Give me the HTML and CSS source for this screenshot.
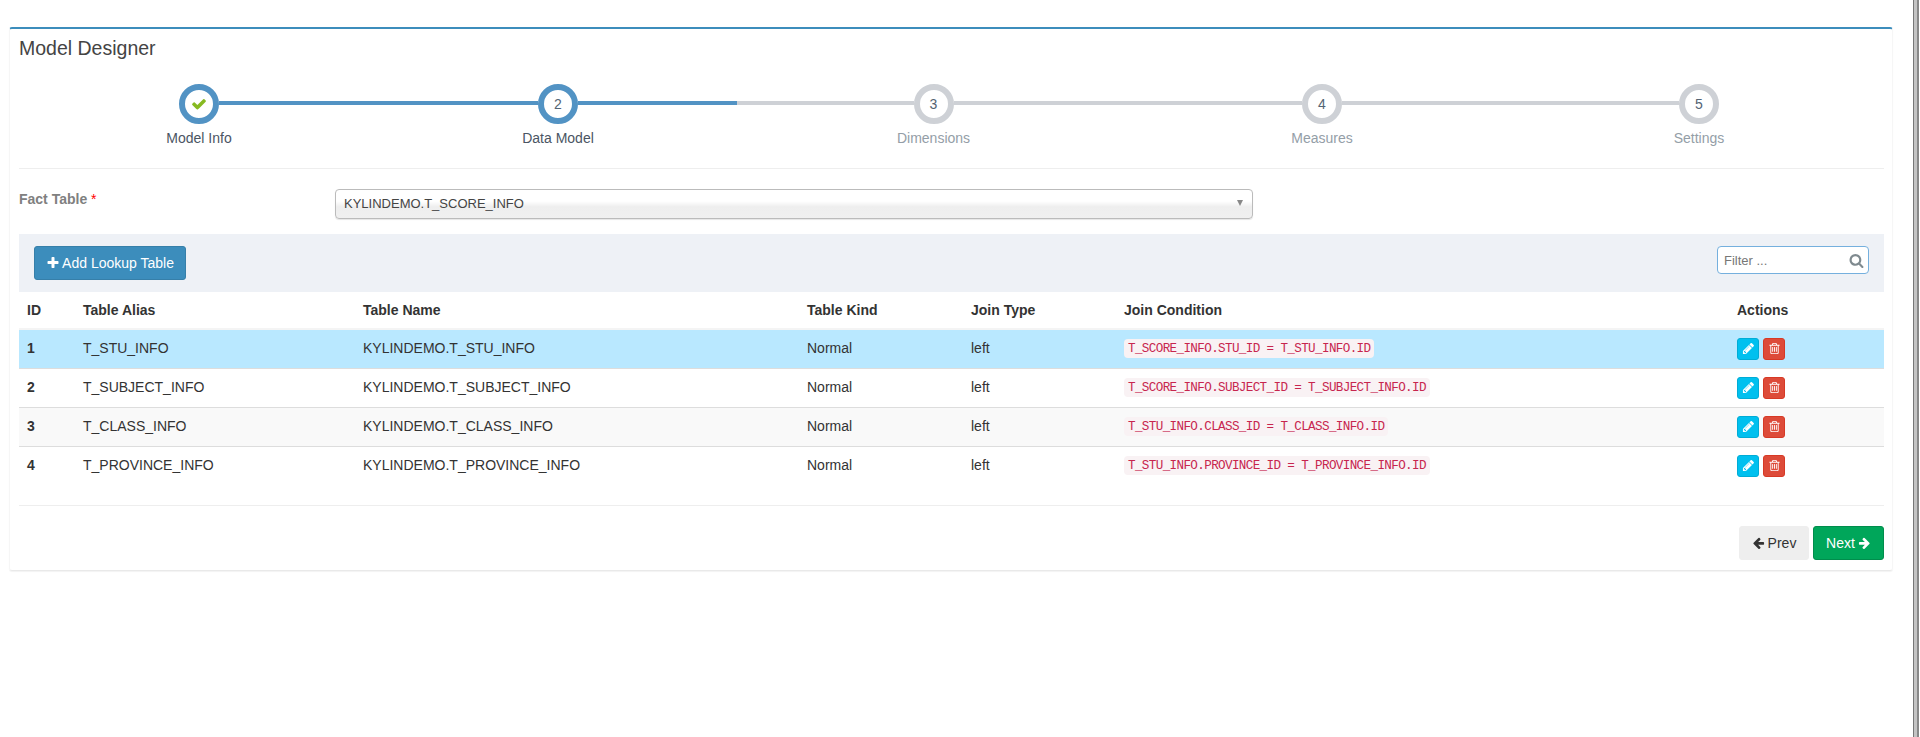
FILE: index.html
```html
<!DOCTYPE html>
<html lang="en">
<head>
<meta charset="utf-8">
<title>Model Designer</title>
<link rel="stylesheet" href="styles.css">
</head>
<body>
<svg class="defs" aria-hidden="true">
  <symbol id="i-check" viewBox="0 0 1792 1792"><path d="M1671 566q0 40-28 68l-724 724-136 136q-28 28-68 28t-68-28l-136-136-362-362q-28-28-28-68t28-68l136-136q28-28 68-28t68 28l294 295 656-657q28-28 68-28t68 28l136 136q28 28 28 68z"/></symbol>
  <symbol id="i-plus" viewBox="0 0 1792 1792"><path d="M1600 736v192q0 40-28 68t-68 28h-416v416q0 40-28 68t-68 28h-192q-40 0-68-28t-28-68v-416h-416q-40 0-68-28t-28-68v-192q0-40 28-68t68-28h416v-416q0-40 28-68t68-28h192q40 0 68 28t28 68v416h416q40 0 68 28t28 68z"/></symbol>
  <symbol id="i-search" viewBox="0 0 1792 1792"><path d="M1216 832q0-185-131.500-316.500t-316.500-131.500-316.500 131.500-131.500 316.500 131.500 316.500 316.500 131.500 316.500-131.500 131.500-316.500zm512 832q0 52-38 90t-90 38q-54 0-90-38l-343-342q-179 124-399 124-143 0-273.500-55.500t-225-150-150-225-55.500-273.500 55.500-273.500 150-225 225-150 273.500-55.500 273.500 55.500 225 150 150 225 55.500 273.500q0 220-124 399l343 343q37 37 37 90z"/></symbol>
  <symbol id="i-pencil" viewBox="0 0 1792 1792"><path d="M491 1536l91-91-235-235-91 91v107h128v128h107zm523-928q0-22-22-22-10 0-17 7l-542 542q-7 7-7 17 0 22 22 22 10 0 17-7l542-542q7-7 7-17zm-54-192l416 416-832 832h-416v-416zm683 96q0 53-37 90l-166 166-416-416 166-165q36-38 90-38 53 0 91 38l235 234q37 39 37 91z"/></symbol>
  <symbol id="i-trash" viewBox="0 0 1792 1792"><path d="M704 736v576q0 14-9 23t-23 9h-64q-14 0-23-9t-9-23v-576q0-14 9-23t23-9h64q14 0 23 9t9 23zm256 0v576q0 14-9 23t-23 9h-64q-14 0-23-9t-9-23v-576q0-14 9-23t23-9h64q14 0 23 9t9 23zm256 0v576q0 14-9 23t-23 9h-64q-14 0-23-9t-9-23v-576q0-14 9-23t23-9h64q14 0 23 9t9 23zm128 724v-948h-896v948q0 22 7 40.500t14.500 27 10.500 8.500h832q3 0 10.500-8.500t14.500-27 7-40.500zm-672-1076h448l-48-117q-7-9-17-11h-317q-10 2-17 11zm928 32v64q0 14-9 23t-23 9h-96v948q0 83-47 143.500t-113 60.500h-832q-66 0-113-58.500t-47-141.500v-952h-96q-14 0-23-9t-9-23v-64q0-14 9-23t23-9h309l70-167q15-37 54-63t79-26h320q40 0 79 26t54 63l70 167h309q14 0 23 9t9 23z"/></symbol>
  <symbol id="i-left" viewBox="0 0 1792 1792"><path d="M1664 896v128q0 53-32.500 90.500t-84.500 37.500h-704l293 294q38 36 38 90t-38 90l-75 76q-37 37-90 37-52 0-91-37l-651-652q-37-37-37-90 0-52 37-91l651-650q38-38 91-38 52 0 90 38l75 74q38 38 38 91t-38 91l-293 293h704q52 0 84.500 37.500t32.500 90.500z"/></symbol>
  <symbol id="i-right" viewBox="0 0 1792 1792"><path d="M1600 960q0 54-37 91l-651 651q-39 37-91 37-51 0-90-37l-75-75q-38-38-38-91t38-91l293-293h-704q-52 0-84.500-37.500t-32.500-90.500v-128q0-53 32.500-90.500t84.500-37.500h704l-293-294q-38-36-38-90t38-90l75-75q38-38 90-38 53 0 91 38l651 651q37 35 37 90z"/></symbol>
</svg>

<div class="page">
  <main class="box">
    <h3 class="box-title">Model Designer</h3>

    <ol class="steps">
      <li class="step">
        <div class="track"><span class="ln ln-none"></span><span class="dot dot-on"><svg class="ic-check"><use href="#i-check"/></svg></span><span class="ln ln-on"></span></div>
        <div class="step-title title-on">Model Info</div>
      </li>
      <li class="step">
        <div class="track"><span class="ln ln-on"></span><span class="dot dot-on">2</span><span class="ln ln-on"></span></div>
        <div class="step-title title-on">Data Model</div>
      </li>
      <li class="step">
        <div class="track"><span class="ln"></span><span class="dot">3</span><span class="ln"></span></div>
        <div class="step-title">Dimensions</div>
      </li>
      <li class="step">
        <div class="track"><span class="ln"></span><span class="dot">4</span><span class="ln"></span></div>
        <div class="step-title">Measures</div>
      </li>
      <li class="step">
        <div class="track"><span class="ln"></span><span class="dot">5</span><span class="ln ln-none"></span></div>
        <div class="step-title">Settings</div>
      </li>
    </ol>

    <div class="fact-row">
      <label class="fact-label">Fact Table <span class="req">*</span></label>
      <div class="chosen"><span>KYLINDEMO.T_SCORE_INFO</span><i class="caret"></i></div>
    </div>

    <div class="toolbar">
      <button class="btn btn-primary" type="button"><svg class="ic ic-plus"><use href="#i-plus"/></svg>Add Lookup Table</button>
      <div class="filter">
        <input class="filter-input" type="text" placeholder="Filter ...">
        <svg class="ic-search"><use href="#i-search"/></svg>
      </div>
    </div>

    <table class="grid">
      <colgroup>
        <col class="c-id"><col class="c-alias"><col class="c-name"><col class="c-kind"><col class="c-join"><col class="c-cond"><col class="c-act">
      </colgroup>
      <thead>
        <tr><th>ID</th><th>Table Alias</th><th>Table Name</th><th>Table Kind</th><th>Join Type</th><th>Join Condition</th><th>Actions</th></tr>
      </thead>
      <tbody>
        <tr class="row-active">
          <td class="num">1</td><td>T_STU_INFO</td><td>KYLINDEMO.T_STU_INFO</td><td>Normal</td><td>left</td>
          <td><code class="cond">T_SCORE_INFO.STU_ID = T_STU_INFO.ID</code></td>
          <td class="acts"><button class="mini mini-info" type="button"><svg><use href="#i-pencil"/></svg></button><button class="mini mini-danger" type="button"><svg><use href="#i-trash"/></svg></button></td>
        </tr>
        <tr>
          <td class="num">2</td><td>T_SUBJECT_INFO</td><td>KYLINDEMO.T_SUBJECT_INFO</td><td>Normal</td><td>left</td>
          <td><code class="cond">T_SCORE_INFO.SUBJECT_ID = T_SUBJECT_INFO.ID</code></td>
          <td class="acts"><button class="mini mini-info" type="button"><svg><use href="#i-pencil"/></svg></button><button class="mini mini-danger" type="button"><svg><use href="#i-trash"/></svg></button></td>
        </tr>
        <tr class="row-odd">
          <td class="num">3</td><td>T_CLASS_INFO</td><td>KYLINDEMO.T_CLASS_INFO</td><td>Normal</td><td>left</td>
          <td><code class="cond">T_STU_INFO.CLASS_ID = T_CLASS_INFO.ID</code></td>
          <td class="acts"><button class="mini mini-info" type="button"><svg><use href="#i-pencil"/></svg></button><button class="mini mini-danger" type="button"><svg><use href="#i-trash"/></svg></button></td>
        </tr>
        <tr class="row-last">
          <td class="num">4</td><td>T_PROVINCE_INFO</td><td>KYLINDEMO.T_PROVINCE_INFO</td><td>Normal</td><td>left</td>
          <td><code class="cond">T_STU_INFO.PROVINCE_ID = T_PROVINCE_INFO.ID</code></td>
          <td class="acts"><button class="mini mini-info" type="button"><svg><use href="#i-pencil"/></svg></button><button class="mini mini-danger" type="button"><svg><use href="#i-trash"/></svg></button></td>
        </tr>
      </tbody>
    </table>

    <div class="box-footer">
      <button class="btn btn-default" type="button"><svg class="ic ic-left"><use href="#i-left"/></svg>Prev</button>
      <button class="btn btn-success" type="button">Next<svg class="ic ic-right"><use href="#i-right"/></svg></button>
    </div>
  </main>
  <div class="scroll-edge"></div>
</div>
</body>
</html>
```

FILE: styles.css
```css
* { box-sizing: border-box; }

html, body {
  margin: 0;
  height: 737px;
  overflow: hidden;
  background: #fff;
  font-family: "Liberation Sans", Arial, sans-serif;
  font-size: 14px;
  color: #333;
}

.defs { display: none; }

.page {
  display: flex;
  align-items: flex-start;
  height: 737px;
  padding: 27px 1px 0 9px;
}

.box {
  width: 1884px;
  height: 544px;
  flex: none;
  padding: 0 8px 0 9px;
  border-top: 2px solid #3c8dbc;
  border-left: 1px solid #f6f6f6;
  border-right: 1px solid #f6f6f6;
  border-bottom: 1px solid #e9e9e9;
  border-radius: 3px;
  box-shadow: 0 1px 1px rgba(0, 0, 0, .05);
}

.box-title {
  margin: 0;
  height: 38px;
  line-height: 38px;
  font-size: 19.5px;
  font-weight: 400;
  color: #444;
}

.scroll-edge {
  width: 6px;
  height: 737px;
  margin: -27px 0 0 auto;
  background: linear-gradient(90deg, #777 0, #777 17%, #c4c4c4 17%, #c4c4c4 66%, #888 66%, #888 100%);
}

/* wizard steps */
.steps {
  display: grid;
  grid-template-columns: 360px 358px 393px 384px 370px;
  margin: 17px 0 0;
  padding: 0 0 20px;
  list-style: none;
  border-bottom: 1px solid #eee;
}

.step { text-align: center; }

.track {
  display: flex;
  align-items: flex-start;
  height: 40px;
}

.ln {
  flex: 1;
  height: 4px;
  margin-top: 17px;
  background: #ced1d6;
}
.ln-on { background: #5293c4; }
.ln-none { background: transparent; }

.dot {
  flex: none;
  width: 40px;
  height: 40px;
  border: 6px solid #ced1d6;
  border-radius: 50%;
  background: #fff;
  display: flex;
  align-items: center;
  justify-content: center;
  font-size: 14px;
  color: #546474;
}
.dot-on { border-color: #5293c4; }

.ic-check {
  width: 16px;
  height: 16px;
  fill: #87ba21;
}

.step-title {
  margin-top: 4px;
  line-height: 20px;
  color: #949ea7;
}
.title-on { color: #4a5563; }

/* fact table row */
.fact-row {
  display: flex;
  align-items: flex-start;
  padding: 20px 0 15px;
  height: 65px;
}

.fact-label {
  width: 316px;
  flex: none;
  font-weight: 700;
  line-height: 20px;
  color: #808080;
}
.req { color: #f00; font-weight: 400; }

.chosen {
  width: 918px;
  height: 30px;
  display: flex;
  align-items: center;
  justify-content: space-between;
  padding: 0 9px 2px 8px;
  font-size: 13px;
  color: #444;
  border: 1px solid #bbb;
  border-radius: 4px;
  background: linear-gradient(#fff 0, #fff 40%, #eee 60%, #f0f0f0 100%);
  box-shadow: 0 1px 1px rgba(0, 0, 0, .1);
}

.caret {
  width: 0;
  height: 0;
  border-left: 3.5px solid transparent;
  border-right: 3.5px solid transparent;
  border-top: 6px solid #888;
}

/* toolbar */
.toolbar {
  display: flex;
  align-items: flex-start;
  justify-content: space-between;
  height: 58px;
  padding: 12px 15px 0 15px;
  background: #eef1f6;
}

.btn {
  height: 34px;
  display: inline-flex;
  align-items: center;
  justify-content: center;
  padding: 0;
  font-family: inherit;
  font-size: 14px;
  white-space: nowrap;
  border-radius: 3px;
  border: 1px solid transparent;
}
.btn-primary { width: 152px; background: #3c8dbc; border-color: #367fa9; color: #fff; }
.btn-default { width: 70px; background: #eee; border-color: #eee; color: #333; }
.btn-success { width: 71px; background: #00a65a; border-color: #008d4c; color: #fff; }

.ic { width: 13px; height: 14px; fill: currentColor; flex: none; }
.ic-plus { margin-right: 2px; width: 14px; }
.ic-left { margin-right: 3px; }
.ic-right { margin-left: 3px; }

.filter { position: relative; width: 152px; height: 28px; }

.filter-input {
  width: 100%;
  height: 100%;
  padding: 0 26px 0 6px;
  font-family: inherit;
  font-size: 13px;
  color: #555;
  border: 1px solid #75b0de;
  border-radius: 4px;
  background: #fff;
  outline: none;
}
.filter-input::placeholder { color: #777; opacity: 1; }

.ic-search {
  position: absolute;
  right: 5px;
  top: 7px;
  width: 15px;
  height: 15px;
  fill: #7f8a8f;
}

/* table */
.grid {
  width: 1865px;
  border-collapse: separate;
  border-spacing: 0;
  table-layout: fixed;
}

.c-id { width: 56px; }
.c-alias { width: 280px; }
.c-name { width: 444px; }
.c-kind { width: 164px; }
.c-join { width: 153px; }
.c-cond { width: 613px; }
.c-act { width: 155px; }

.grid th {
  height: 38px;
  padding: 0 8px;
  text-align: left;
  font-weight: 700;
  color: #333;
  border-bottom: 2px solid #f4f4f4;
}

.grid td {
  height: 39px;
  padding: 0 8px 2px;
  color: #333;
  border-bottom: 1px solid #ddd;
  white-space: nowrap;
}

.grid .num { font-weight: 700; }
.row-active td { background: #b9e8ff; }
.row-odd td { background: #f9f9f9; }
.grid .row-last td { border-bottom-color: transparent; }

.cond {
  display: block;
  width: fit-content;
  height: 19px;
  margin-top: 1px;
  line-height: 21px;
  padding: 0 4px;
  font-family: "Liberation Mono", "DejaVu Sans Mono", monospace;
  font-size: 12.6px;
  letter-spacing: -0.63px;
  color: #c7254e;
  background: #f9f2f4;
  border-radius: 4px;
}

.grid .acts { font-size: 0; padding-bottom: 1px; }

.mini {
  width: 22px;
  height: 22px;
  padding: 0;
  margin-right: 4px;
  display: inline-flex;
  align-items: center;
  justify-content: center;
  border: 1px solid transparent;
  border-radius: 3px;
  vertical-align: middle;
}
.mini svg { width: 13px; height: 13px; fill: #fff; }
.mini-info { background: #00c0ef; border-color: #00acd6; }
.mini-danger { background: #dd4b39; border-color: #d73925; }

/* footer */
.box-footer {
  margin-top: 19px;
  padding-top: 20px;
  border-top: 1px solid #eee;
  display: flex;
  justify-content: flex-end;
  gap: 4px;
}
```
